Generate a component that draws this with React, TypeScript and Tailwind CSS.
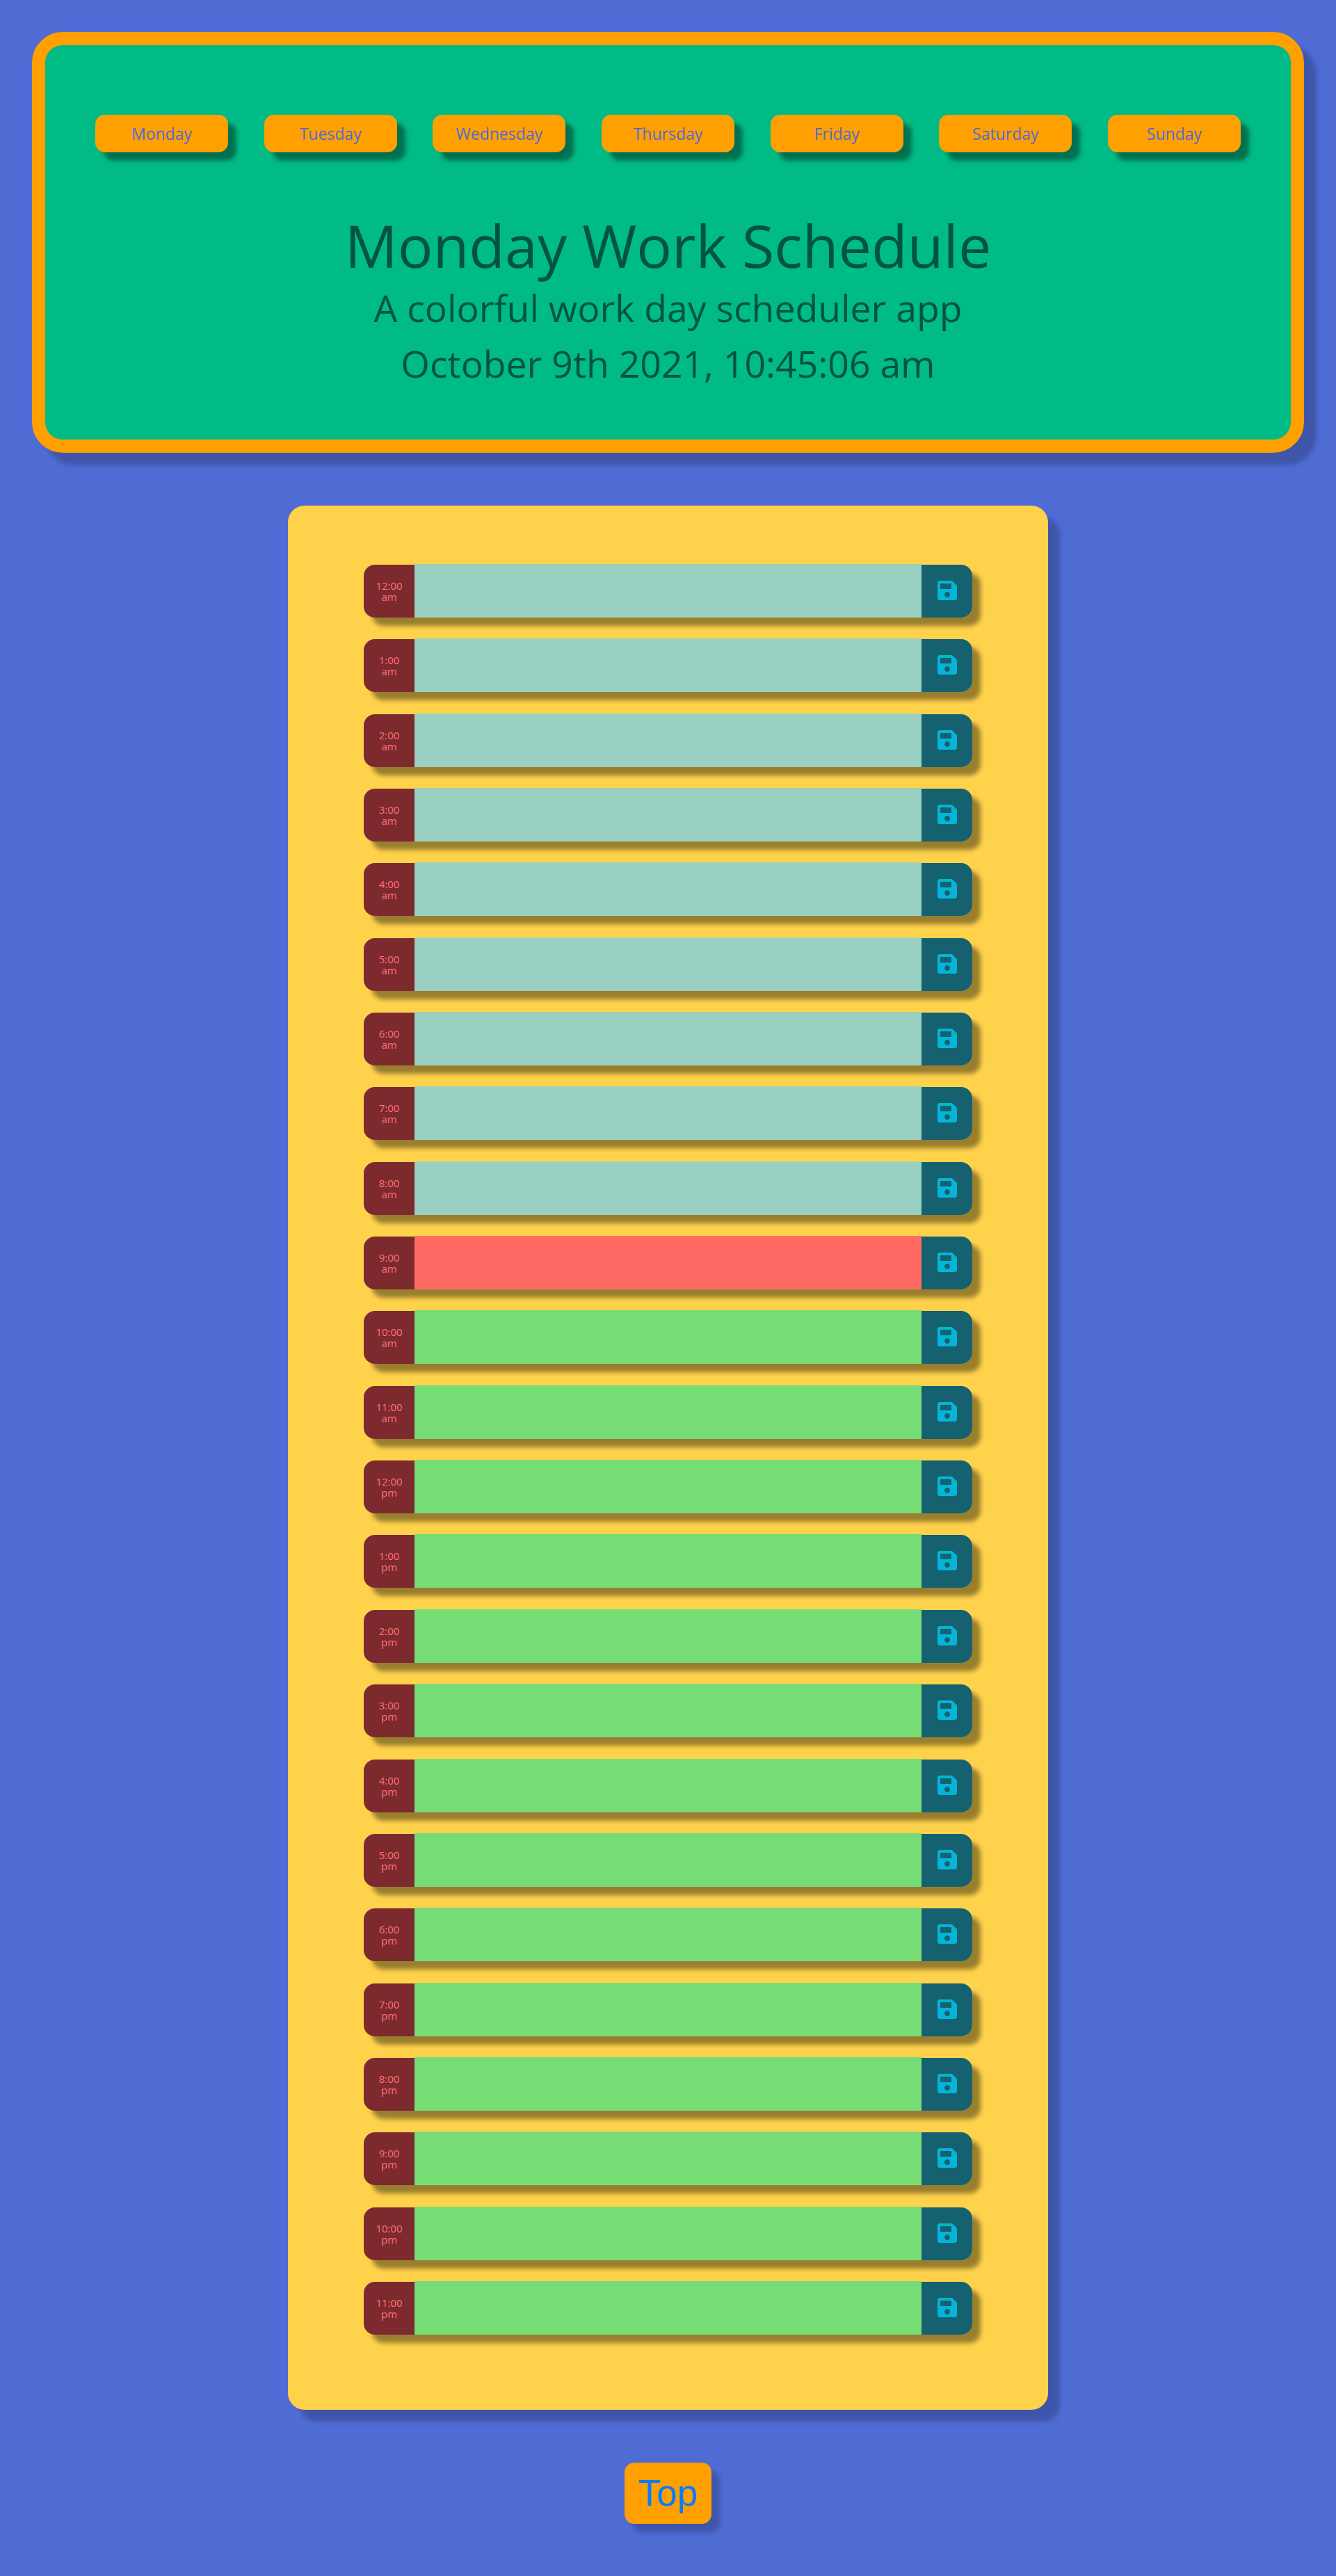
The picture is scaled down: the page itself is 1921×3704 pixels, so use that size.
const DAYS = ['Monday', 'Tuesday', 'Wednesday', 'Thursday', 'Friday', 'Saturday', 'Sunday'];

const HOURS = [
  '12:00 am', '1:00 am', '2:00 am', '3:00 am', '4:00 am', '5:00 am', '6:00 am', '7:00 am',
  '8:00 am', '9:00 am', '10:00 am', '11:00 am', '12:00 pm', '1:00 pm', '2:00 pm', '3:00 pm',
  '4:00 pm', '5:00 pm', '6:00 pm', '7:00 pm', '8:00 pm', '9:00 pm', '10:00 pm', '11:00 pm',
];

// current hour in the screenshot is 9:00 am
const CURRENT = 9;

function SaveIcon() {
  return (
    <svg viewBox="0 0 448 512" className="w-[28px] h-[32px] -translate-y-px" fill="#06b4d8">
      <path d="M433.941 129.941l-83.882-83.882A48 48 0 0 0 316.118 32H48C21.49 32 0 53.49 0 80v352c0 26.51 21.49 48 48 48h352c26.51 0 48-21.49 48-48V163.882a48 48 0 0 0-14.059-33.941zM224 416c-35.346 0-64-28.654-64-64 0-35.346 28.654-64 64-64s64 28.654 64 64c0 35.346-28.654 64-64 64zm96-304.52V212c0 6.627-5.373 12-12 12H76c-6.627 0-12-5.373-12-12V108c0-6.627 5.373-12 12-12h228.52c3.183 0 6.235 1.264 8.485 3.515l3.48 3.48A11.996 11.996 0 0 1 320 111.48z" />
    </svg>
  );
}

export default function App() {
  return (
    <div className="min-h-[3704px] bg-[#4f6bd4] pt-[46px] font-['Open_Sans',sans-serif]">
      {/* header */}
      <header className="mx-[46px] h-[605px] rounded-[44px] border-[19px] border-[#ff9f00] bg-[#00bb85] shadow-[18px_18px_6px_rgba(0,0,0,0.2)] text-center text-[#03543d]">
        <nav className="flex justify-between px-[72px] pt-[100px]">
          {DAYS.map((day) => (
            <button
              key={day}
              className="w-[191px] h-[54px] rounded-[14px] bg-[#ff9f00] text-[#4f6bd4] text-[23px] shadow-[12px_12px_6px_rgba(0,0,0,0.4)]"
            >
              {day}
            </button>
          ))}
        </nav>
        <h1 className="mt-[74px] text-[84.5px] leading-[120px] font-normal">Monday Work Schedule</h1>
        <p className="-mt-[8px] text-[53.5px] leading-[76px]">A colorful work day scheduler app</p>
        <p className="mt-[4px] text-[53.5px] leading-[76px]">October 9th 2021, 10:45:06 am</p>
      </header>

      {/* schedule */}
      <main className="mx-auto mt-[76px] ml-[414px] w-[1093px] h-[2738px] rounded-[24px] bg-[#ffd24c] pt-[85px] shadow-[17px_17px_6px_rgba(0,0,0,0.2)]">
        <div className="flex flex-col gap-[31.35px] mx-[109px]">
          {HOURS.map((hour, i) => {
            const [time, period] = hour.split(' ');
            return (
              <div key={hour} className="flex h-[76px] items-end rounded-[16px] shadow-[12px_12px_6px_rgba(0,0,0,0.4)]">
                <div className="w-[73px] h-[76px] shrink-0 flex flex-col items-center justify-center rounded-l-[16px] bg-[#7d2a2e] text-[#ff7272] text-[15px] leading-[16px]">
                  <span>{time}</span>
                  <span>{period}</span>
                </div>
                {i < CURRENT && <textarea readOnly className="flex-1 h-[77px] resize-none bg-[#9ad0c2]" />}
                {i === CURRENT && <textarea readOnly className="flex-1 h-[77px] resize-none bg-[#ff6b64]" />}
                {i > CURRENT && <textarea readOnly className="flex-1 h-[77px] resize-none bg-[#76dd76]" />}
                <button className="w-[73px] h-[76px] shrink-0 flex items-center justify-center rounded-r-[16px] bg-[#15616f]">
                  <SaveIcon />
                </button>
              </div>
            );
          })}
        </div>
      </main>

      <div className="flex justify-center pt-[76px] pb-[75px]">
        <button className="w-[125px] h-[88px] rounded-[14px] bg-[#ff9f00] text-[#0a7bff] text-[53px] font-['Liberation_Sans',sans-serif] shadow-[12px_12px_6px_rgba(0,0,0,0.2)]">
          Top
        </button>
      </div>
    </div>
  );
}
